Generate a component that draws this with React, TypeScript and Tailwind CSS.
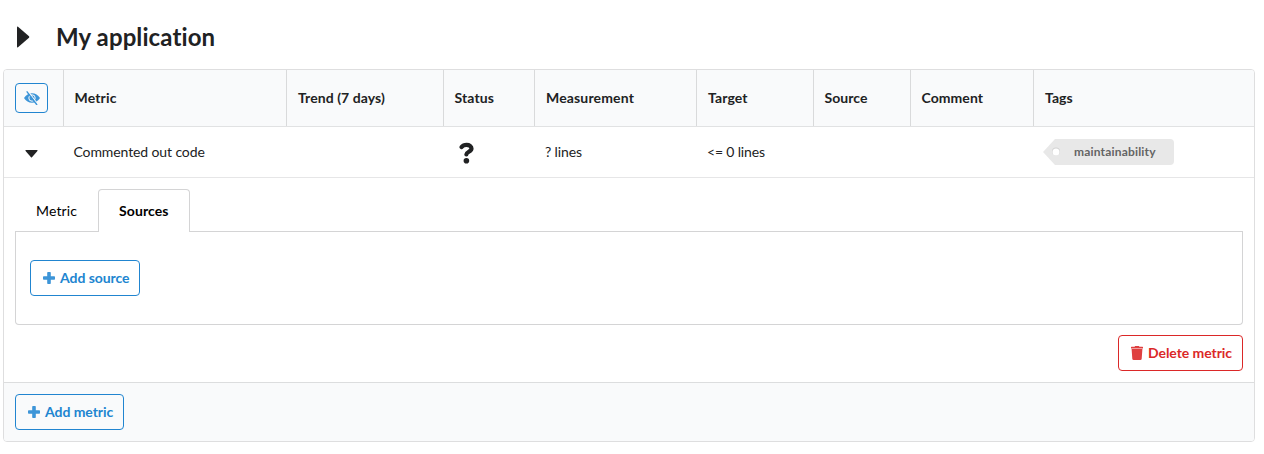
import React from 'react';

const columns = 'grid grid-cols-[59px_223px_157px_91px_162px_117px_97px_123px_221px]';
const headings = [
  { label: 'Metric', spacing: 'pl-[10.5px] tracking-[0.15px]' },
  { label: 'Trend (7 days)', spacing: 'pl-[11px] tracking-[0.07px]' },
  { label: 'Status', spacing: 'pl-[10.5px] tracking-[0.1px]' },
  { label: 'Measurement', spacing: 'pl-[11px] tracking-[0.15px]' },
  { label: 'Target', spacing: 'pl-[11px] tracking-[0.1px]' },
  { label: 'Source', spacing: 'pl-[10.5px] tracking-[0.06px]' },
  { label: 'Comment', spacing: 'pl-[10.5px] tracking-[0.06px]' },
  { label: 'Tags', spacing: 'pl-[11px] tracking-[0.05px]' },
];

function HiddenIcon() {
  return (
    <svg className="h-[14px] w-4" viewBox="0 0 16 14" fill="none">
      <path d="M0 7Q3 2.2 8 2.2T16 7Q13 11.8 8 11.8T0 7Z" fill="#3d95d8" />
      <circle cx="8" cy="7" r="3.2" stroke="#f9fafb" strokeWidth="1" />
      <path d="M4.1 .1L13.8 13.3" stroke="#f9fafb" strokeWidth="1.1" />
      <path d="M3.1 .8L12.7 13.5" stroke="#3d95d8" strokeWidth="1.4" strokeLinecap="round" />
    </svg>
  );
}

function QuestionIcon() {
  return (
    <svg className="h-[22px] w-4" viewBox="0 0 16 22" fill="none">
      <path d="M2.6 5.1C3.8 3.5 5.4 2.9 7.6 2.9C10.4 2.9 12.5 4.3 12.5 6.5C12.5 9.7 7.6 9.7 7.4 12.4" stroke="#212223" strokeWidth="4.2" strokeLinecap="round" strokeLinejoin="round" />
      <circle cx="7.4" cy="18.7" r="2.8" fill="#212223" />
    </svg>
  );
}

function AddButton({ label, width }: { label: string; width: string }) {
  return (
    <button className={`flex h-9 ${width} items-center rounded-[4px] border border-[#2185d0] pl-[12px] font-bold text-[#2185d0]`}>
      <svg className="mr-[5px] size-3 shrink-0" viewBox="0 0 12 12" fill="#3d95d8">
        <rect x="4.2" y="0" width="3.6" height="12" rx=".8" />
        <rect x="0" y="4.2" width="12" height="3.6" rx=".8" />
      </svg>
      <span className="tracking-[-0.06px] whitespace-nowrap">{label}</span>
    </button>
  );
}

export default function App() {
  return (
    <div className="h-[454px] w-[1264px] overflow-hidden bg-white pl-[3px] font-['Lato',sans-serif] text-[14px] leading-5 text-[#212223] [font-variant-ligatures:none]">
      <header className="flex h-[69px] items-center pt-[5px] pl-[14px]">
        <svg className="h-[22px] w-[13px]" viewBox="0 0 13 22" fill="#212223">
          <path d="M0 1.5Q0 .2 1 .8L12 10.2Q12.6 11 12 11.8L1 21.2Q0 21.8 0 20.5Z" />
        </svg>
        <h1 className="ml-[26px] text-[24px] leading-[30px] font-bold tracking-[0.1px]">My application</h1>
      </header>

      <main className="h-[373px] w-[1252px] overflow-hidden rounded-[4px] border border-[#dededf]">
        <div className={`${columns} h-[57px] border-b border-[#e1e2e3] bg-[#f9fafb]`}>
          <div className="flex items-center pl-[11px]">
            <button className="flex h-[30px] w-[33px] items-center justify-center rounded-[4px] border border-[#2185d0]">
              <HiddenIcon />
            </button>
          </div>
          {headings.map(({ label, spacing }) => (
            <div key={label} className={`flex items-center border-l border-[#d9dadb] font-bold ${spacing}`}>
              <span className="whitespace-nowrap">{label}</span>
            </div>
          ))}
        </div>

        <div className={`${columns} h-[51px] items-center border-b border-[#e6e6e7]`}>
          <div className="pt-[3px] pl-[21px]">
            <svg className="h-[8px] w-[13px]" viewBox="0 0 13 8" fill="#212223">
              <path d="M1 0H12Q13 0 12.4 1L7 7.3Q6.5 7.8 6 7.3L.6 1Q0 0 1 0Z" />
            </svg>
          </div>
          <div className="pl-[10.5px] tracking-[-0.11px]">Commented out code</div>
          <div />
          <div className="pt-px pl-[15.5px]"><QuestionIcon /></div>
          <div className="pl-[11px] tracking-[-0.12px]">? lines</div>
          <div className="pl-[11px] tracking-[-0.16px]">&lt;= 0 lines</div>
          <div />
          <div />
          <div className="flex items-center pl-[10px]">
            <svg className="h-[26px] w-[13px]" viewBox="0 0 13 26">
              <path d="M13 0H12L0 13L12 26H13Z" fill="#e8e8e8" />
              <circle cx="13" cy="12.5" r="4" fill="#d2d2d2" />
              <circle cx="13" cy="13" r="3.5" fill="white" />
            </svg>
            <div className="flex h-[26px] w-[118px] items-center rounded-r-[4px] bg-[#e8e8e8]">
              <svg className="h-[26px] w-[18px]" viewBox="0 0 18 26">
                <circle cx="0" cy="12.5" r="4" fill="#d2d2d2" />
                <circle cx="0" cy="13" r="3.5" fill="white" />
              </svg>
              <span className="text-[12px] leading-3 font-bold tracking-[0.18px] text-[#646464]">maintainability</span>
            </div>
          </div>
        </div>

        <section className="h-[204px] px-[11px] pt-[11px]">
          <nav className="flex h-[43px] text-black">
            <div className="flex w-[83px] items-center border-b border-[#d4d4d5] pt-px pl-[21px] tracking-[0.15px]">Metric</div>
            <div className="flex w-[92px] items-center rounded-t-[4px] border-x border-t border-[#d4d4d5] pl-[20px] font-bold tracking-[0.1px]">Sources</div>
            <div className="flex-1 border-b border-[#d4d4d5]" />
          </nav>
          <div className="h-[93px] rounded-b-[4px] border-x border-b border-[#d4d4d5] pt-[28px] pl-[14px]">
            <AddButton label="Add source" width="w-[110px]" />
          </div>
          <div className="flex justify-end pt-[10px]">
            <button className="flex h-9 w-[125px] items-center rounded-[4px] border border-[#db2828] pl-[12px] font-bold text-[#db2828]">
              <svg className="mr-[5px] h-[14px] w-3 shrink-0" viewBox="0 0 12 14" fill="#df4040">
                <path d="M.5 .8H3.6L4.1 0H7.9L8.4 .8H11.5Q12 .8 12 1.3V2.6H0V1.3Q0 .8 .5 .8ZM.6 3.1H11.4L10.7 12.7Q10.6 14 9.3 14H2.7Q1.4 14 1.3 12.7Z" />
              </svg>
              <span className="tracking-[-0.06px] whitespace-nowrap">Delete metric</span>
            </button>
          </div>
        </section>

        <footer className="h-[59px] border-t border-[#dcddde] bg-[#f9fafb] pt-[11px] pl-[11px]">
          <AddButton label="Add metric" width="w-[109px]" />
        </footer>
      </main>
    </div>
  );
}
